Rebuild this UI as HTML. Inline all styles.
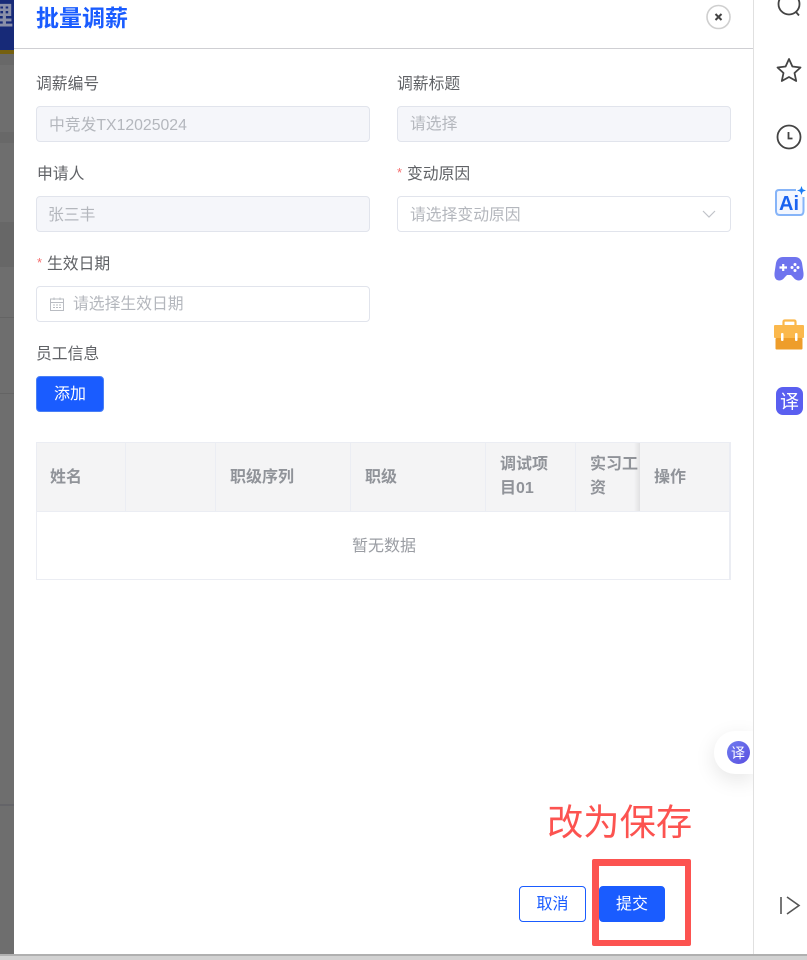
<!DOCTYPE html>
<html lang="zh-CN">
<head>
<meta charset="utf-8">
<title>批量调薪</title>
<style>
html,body{margin:0;padding:0;width:807px;height:960px;overflow:hidden;background:#fff;font-family:"Liberation Sans","Noto Sans CJK SC",sans-serif;}
.a{position:absolute}
.t{position:absolute;white-space:nowrap;font-size:15.8px;line-height:20px}
.label{color:#606266}
.inp{position:absolute;box-sizing:border-box;width:334px;height:36px;border:1px solid #e1e4ec;border-radius:4px;background:#fff}
.inp.d{background:#f5f6fa}
.ph{color:#b4b7bd}
.req{color:#f56c6c}
.th{position:absolute;white-space:nowrap;font-size:16px;line-height:24px;font-weight:700;color:#909399}
.v{position:absolute;top:443px;width:1px;height:68px;background:#ebedf3}
.btn{position:absolute;box-sizing:border-box;height:36px;border-radius:4px;text-align:center;line-height:36px;font-size:16px}
</style>
</head>
<body>
<div class="a" style="left:0;top:0;width:807px;height:960px;overflow:hidden">
  <!-- Left dimmed strip -->
  <div class="a" style="left:0;top:0;width:14px;height:960px;background:#6e6e6e"></div>
  <div class="a" style="left:0;top:0;width:14px;height:50px;background:#172a78"></div>
  <div class="a" style="left:0;top:50px;width:14px;height:4px;background:#75600f"></div>
  <div class="a" style="left:0;top:54px;width:14px;height:11px;background:#686868"></div>
  <div class="a" style="left:0;top:132px;width:14px;height:11px;background:#686868"></div>
  <div class="a" style="left:0;top:222px;width:14px;height:45px;background:#676767"></div>
  <div class="a" style="left:0;top:317px;width:14px;height:1px;background:#646464"></div>
  <div class="a" style="left:0;top:393px;width:14px;height:1px;background:#646464"></div>
  <div class="a" style="left:0;top:804px;width:14px;height:2px;background:#646468"></div>
  <div class="t" style="left:-13px;top:1px;font-size:26px;line-height:30px;font-weight:700;color:#8a8fa8;width:27px;overflow:hidden">理</div>

  <!-- Drawer -->
  <div class="a" style="left:14px;top:0;width:739px;height:954px;background:#fff"></div>
  <div class="a" style="left:14px;top:48px;width:739px;height:1px;background:#cfcfd3"></div>
  <div class="t" style="left:36px;top:3px;font-size:23px;line-height:30px;font-weight:700;color:#1a5cff">批量调薪</div>
  <svg class="a" style="left:705px;top:4px" width="27" height="26" viewBox="0 0 27 26">
    <circle cx="13.5" cy="13" r="11.5" fill="#fff" stroke="#cfcfcf" stroke-width="1.6"/>
    <path d="M10.5 10 16.5 16M16.5 10 10.5 16" stroke="#444" stroke-width="2" fill="none"/>
  </svg>

  <!-- Form -->
  <div class="t label" style="left:36px;top:75px">调薪编号</div>
  <div class="inp d" style="left:36px;top:106px"></div>
  <div class="t ph" style="left:49px;top:116px">中竞发TX12025024</div>

  <div class="t label" style="left:397px;top:75px">调薪标题</div>
  <div class="inp d" style="left:397px;top:106px"></div>
  <div class="t ph" style="left:410px;top:115px">请选择</div>

  <div class="t label" style="left:37px;top:165px">申请人</div>
  <div class="inp d" style="left:36px;top:196px"></div>
  <div class="t ph" style="left:48px;top:206px">张三丰</div>

  <div class="t req" style="left:397px;top:163px;font-size:13px">*</div>
  <div class="t label" style="left:407px;top:165px">变动原因</div>
  <div class="inp" style="left:397px;top:196px"></div>
  <div class="t ph" style="left:410px;top:206px">请选择变动原因</div>
  <svg class="a" style="left:701px;top:208px" width="16" height="12" viewBox="0 0 16 12"><path d="M2 3 8 9 14 3" fill="none" stroke="#c0c3c9" stroke-width="1.2"/></svg>

  <div class="t req" style="left:37px;top:253px;font-size:13px">*</div>
  <div class="t label" style="left:47px;top:255px">生效日期</div>
  <div class="inp" style="left:36px;top:286px"></div>
  <svg class="a" style="left:49px;top:296px" width="16" height="16" viewBox="0 0 16 16">
    <path d="M1.500 3H14.500V14.500H1.500ZM1.500 6.500H14.500M5 1.500V4M11 1.500V4" fill="none" stroke="#b9bcc2" stroke-width="1"/>
    <path d="M4 9H6M7 9H9M10 9H12M4 11.500H6M7 11.500H9M10 11.500H12" stroke="#b9bcc2" stroke-width="1"/>
  </svg>
  <div class="t ph" style="left:73px;top:295px">请选择生效日期</div>

  <div class="t label" style="left:36px;top:345px">员工信息</div>
  <div class="btn" style="left:36px;top:376px;width:68px;background:#1a5cff;border:1px solid #4a80f5;color:#fff;line-height:35px">添加</div>

  <!-- Table -->
  <div class="a" style="left:36px;top:442px;width:695px;height:138px;box-sizing:border-box;border:1px solid #ebedf3;border-right-width:2px;background:#fff"></div>
  <div class="a" style="left:37px;top:443px;width:692px;height:68px;background:#f4f4f5"></div>
  <div class="a" style="left:37px;top:511px;width:692px;height:1px;background:#ebedf3"></div>
  <div class="v" style="left:125px"></div>
  <div class="v" style="left:215px"></div>
  <div class="v" style="left:350px"></div>
  <div class="v" style="left:485px"></div>
  <div class="v" style="left:575px"></div>
  <div class="th" style="left:50px;top:466px">姓名</div>
  <div class="th" style="left:230px;top:466px">职级序列</div>
  <div class="th" style="left:365px;top:466px">职级</div>
  <div class="th" style="left:500px;top:453px">调试项<br>目01</div>
  <div class="th" style="left:590px;top:453px;width:50px;overflow:hidden">实习工<br>资</div>
  <div class="a" style="left:634px;top:443px;width:6px;height:68px;background:linear-gradient(to right,rgba(0,0,0,0),rgba(0,0,0,.08))"></div>
  <div class="th" style="left:654px;top:466px">操作</div>
  <div class="t" style="left:352px;top:537px;color:#9a9da3;font-size:16px">暂无数据</div>

  <!-- Floating translate -->
  <div class="a" style="left:714px;top:731px;width:39px;height:43px;background:#fff;border-radius:21px 0 0 21px;box-shadow:0 6px 20px rgba(0,0,0,.1);clip-path:inset(-30px 0 -30px -30px)"></div>
  <div class="a" style="left:727px;top:741px;width:23px;height:23px;border-radius:50%;background:linear-gradient(135deg,#6f7cf0,#5a4fe0)"></div>
  <div class="t" style="left:731px;top:743px;color:#fff;font-size:14px;line-height:20px">译</div>

  <!-- Annotation -->
  <div class="t" style="left:547px;top:801px;font-size:36.300px;line-height:44px;color:#fc5350">改为保存</div>
  <div class="a" style="left:592px;top:859px;width:99px;height:87px;box-sizing:border-box;border-style:solid;border-color:#fc5350;border-width:7px 6px 6px 7px;border-radius:2px"></div>

  <!-- Footer buttons -->
  <div class="btn" style="left:519px;top:886px;width:67px;background:#fff;border:1px solid #1a5cff;color:#1a5cff;line-height:35px">取消</div>
  <div class="btn" style="left:599px;top:886px;width:66px;background:#1a5cff;border:1px solid #1a5cff;color:#fff;line-height:35px">提交</div>

  <!-- Right sidebar -->
  <div class="a" style="left:753px;top:0;width:1px;height:954px;background:#e0e0e0"></div>
  <svg class="a" style="left:770px;top:0" width="37" height="420" viewBox="770 0 37 420">
    <!-- search -->
    <circle cx="789" cy="4" r="10.500" fill="none" stroke="#444" stroke-width="1.800"/>
    <path d="M796 12 799 15.500" stroke="#444" stroke-width="1.800" fill="none"/>
    <!-- star -->
    <path d="M789 59 792.400 66.500 800.500 67.500 794.500 73 796.200 81 789 77 781.800 81 783.500 73 777.500 67.500 785.600 66.500Z" fill="none" stroke="#444" stroke-width="1.800" stroke-linejoin="round"/>
    <!-- clock -->
    <circle cx="789" cy="137" r="11.500" fill="none" stroke="#444" stroke-width="1.800"/>
    <path d="M788.500 132V138.500H792.500" fill="none" stroke="#444" stroke-width="1.800"/>
    <!-- AI -->
    <path d="M796 190H779Q776 190 776 193V211Q776 215 780 215H800Q803.500 215 803.500 211V197" fill="#f2f6ff" stroke="#86b4f8" stroke-width="2"/>
    <text x="779" y="210" font-family="Liberation Sans" font-size="20" font-weight="700" fill="#1a63f0">Ai</text>
    <path d="M801.500 186 802.700 189.300 806 190.500 802.700 191.700 801.500 195 800.300 191.700 797 190.500 800.300 189.300Z" fill="#1a7cf5"/>
    <!-- gamepad -->
    <path d="M783 257H795Q800.500 257 802 263L803.500 273Q804 280.500 798.500 280.500Q795.500 280.500 793 277L791 275H787L785 277Q782.500 280.500 779.500 280.500Q774 280.500 774.500 273L776 263Q777.500 257 783 257Z" fill="#6f74ee"/>
    <path d="M779.500 267.500H787M783.200 264V271" stroke="#fff" stroke-width="2.200"/>
    <circle cx="795" cy="264.500" r="1.500" fill="#fff"/><circle cx="795" cy="270.500" r="1.500" fill="#fff"/><circle cx="792" cy="267.500" r="1.500" fill="#fff"/><circle cx="798" cy="267.500" r="1.500" fill="#fff"/>
    <!-- briefcase -->
    <path d="M783.500 326V322Q783.500 320.500 785 320.500H794Q795.500 320.500 795.500 322V326" fill="none" stroke="#fbb74a" stroke-width="2.200"/>
    <rect x="774" y="325" width="30" height="13" rx="1" fill="#fbb84c"/>
    <rect x="775.500" y="338" width="27" height="11.500" rx="1" fill="#ee9d2a"/>
    <rect x="781" y="333" width="2.500" height="8" rx="1" fill="#fff"/>
    <rect x="795" y="333" width="2.500" height="8" rx="1" fill="#fff"/>
    <!-- translate -->
    <rect x="776" y="387" width="27" height="28" rx="7" fill="#5a5ff0"/>
    <text x="780" y="408" font-family="Noto Sans CJK SC" font-size="19" fill="#fff">译</text>
  </svg>
  <svg class="a" style="left:778px;top:894px" width="24" height="24" viewBox="0 0 24 24">
    <path d="M3 3V20" stroke="#555" stroke-width="1.600" fill="none"/>
    <path d="M9 3 21 11.500 9 20" stroke="#555" stroke-width="1.600" fill="none"/>
  </svg>

  <!-- Bottom bar -->
  <div class="a" style="left:0;top:954px;width:807px;height:2px;background:#b0b0b0"></div>
  <div class="a" style="left:0;top:956px;width:807px;height:4px;background:#d2d2d2"></div>
</div>
</body>
</html>
